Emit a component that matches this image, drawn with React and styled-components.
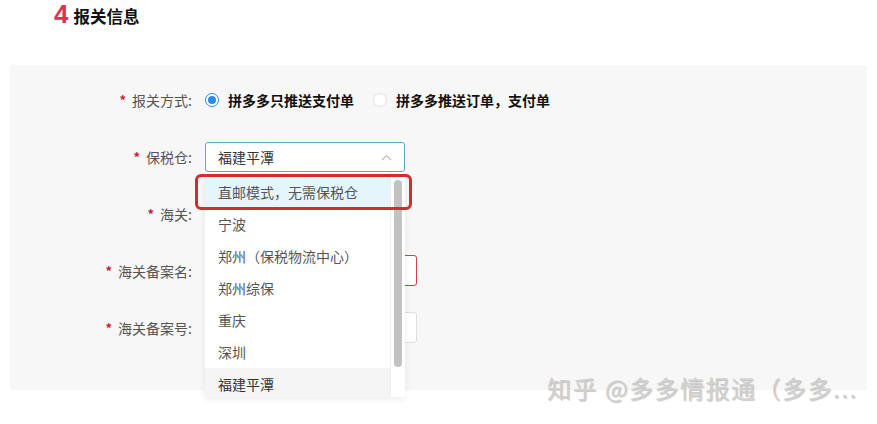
import styled, { createGlobalStyle } from 'styled-components';

const GlobalStyle = createGlobalStyle`
  html, body {
    margin: 0;
    padding: 0;
    background: #fff;
  }
  body {
    font-family: "Noto Sans CJK SC", "Noto Sans", sans-serif;
    color: #333;
  }
`;

const Page = styled.div`
  position: relative;
  width: 877px;
  height: 424px;
  overflow: hidden;
`;

const Header = styled.h2`
  margin: 0;
  height: 65px;
  box-sizing: border-box;
  padding: 0 0 0 54px;
  display: flex;
  align-items: baseline;
  gap: 5px;
  font-size: 16.5px;
  font-weight: 700;
  color: #111;
  line-height: 28px;
`;

const StepNum = styled.span`
  font-family: "Liberation Sans", Arial, sans-serif;
  font-size: 26px;
  line-height: 28px;
  font-weight: 700;
  color: #e0314f;
`;

const Panel = styled.div`
  margin-left: 10px;
  width: 857px;
  height: 325px;
  box-sizing: border-box;
  padding-top: 7px;
  background: #f7f7f7;
  border-radius: 3px;
`;

const Row = styled.div`
  display: grid;
  grid-template-columns: 182px 1fr;
  column-gap: 13px;
  align-items: center;
  height: 56.8px;
`;

const Label = styled.label`
  text-align: right;
  font-size: 14px;
  color: #555;
  white-space: nowrap;
  &::before {
    content: '*';
    color: #c8203a;
    font-size: 13px;
    font-weight: 700;
    margin-right: 6px;
    position: relative;
    top: -1px;
  }
`;

const RadioGroup = styled.div`
  display: flex;
  align-items: center;
`;

const RadioItem = styled.span`
  display: flex;
  align-items: center;
  gap: 9px;
  margin-right: 19px;
  font-size: 14px;
  font-weight: 700;
  color: #111;
`;

const RadioDot = styled.span`
  box-sizing: border-box;
  width: 14px;
  height: 14px;
  border-radius: 50%;
  background: #fff;
  border: 1px solid ${p => (p.checked ? '#2a8be0' : '#e2e2e2')};
  display: flex;
  align-items: center;
  justify-content: center;
  &::after {
    content: '';
    width: 8px;
    height: 8px;
    border-radius: 50%;
    background: ${p => (p.checked ? '#2a8be0' : 'transparent')};
  }
`;

const SelectWrap = styled.div`
  position: relative;
  width: 200px;
`;

const SelectBox = styled.div`
  box-sizing: border-box;
  height: 30px;
  border: 1px solid ${p => (p.active ? '#5aabbd' : '#dcdcdc')};
  border-radius: 3px;
  background: #fff;
  display: flex;
  align-items: center;
  justify-content: space-between;
  padding: 0 12px;
  font-size: 14px;
  color: #333;
`;

const Input = styled.div`
  box-sizing: border-box;
  width: 212px;
  height: 31px;
  background: #fff;
  border: 1px solid ${p => (p.error ? '#c8424a' : '#dedede')};
  border-radius: 3px;
`;

const Dropdown = styled.div`
  position: absolute;
  left: 0;
  top: 100%;
  width: 200px;
  height: 225px;
  background: #fff;
  box-shadow: 0 2px 6px rgba(0, 0, 0, 0.08);
  display: flex;
  z-index: 5;
`;

const OptionList = styled.ul`
  list-style: none;
  margin: 0;
  padding: 4px 0 0;
  flex: 1;
  overflow: hidden;
`;

const Option = styled.li`
  height: 32px;
  line-height: 32px;
  padding-left: 13px;
  font-size: 14px;
  color: ${p => (p.selected ? '#333' : '#555')};
  background: ${p => (p.hover ? '#e4f5fb' : p.selected ? '#f5f5f5' : '#fff')};
  white-space: nowrap;
`;

const ScrollTrack = styled.div`
  width: 15px;
  border-left: 1px solid #efefef;
  box-sizing: border-box;
  padding: 8px 0 0 3px;
`;

const ScrollThumb = styled.div`
  width: 8px;
  height: 187px;
  border-radius: 4px;
  background: #c2c2c2;
`;

const Highlight = styled.div`
  position: absolute;
  left: -10px;
  top: 2px;
  width: 217px;
  height: 36px;
  box-sizing: border-box;
  border: 3px solid #d42b2b;
  border-radius: 6px;
  pointer-events: none;
`;

const Watermark = styled.div`
  position: absolute;
  left: 547px;
  top: 370px;
  font-size: 24px;
  letter-spacing: 1.5px;
  color: #d0d0d0;
  text-shadow: 1px 1px 1px rgba(0, 0, 0, 0.22);
  white-space: nowrap;
`;

const Chevron = () => (
  <svg width="11" height="7" viewBox="0 0 11 7" fill="none">
    <path d="M1 6 L5.5 1.5 L10 6" stroke="#bbb" strokeWidth="1.1" />
  </svg>
);

const options = ['直邮模式，无需保税仓', '宁波', '郑州（保税物流中心）', '郑州综保', '重庆', '深圳', '福建平潭'];

export default function App() {
  return (
    <Page>
      <GlobalStyle />
      <Header>
        <StepNum>4</StepNum>
        报关信息
      </Header>
      <Panel>
        <Row>
          <Label>报关方式:</Label>
          <RadioGroup>
            <RadioItem>
              <RadioDot checked />
              拼多多只推送支付单
            </RadioItem>
            <RadioItem>
              <RadioDot />
              拼多多推送订单，支付单
            </RadioItem>
          </RadioGroup>
        </Row>
        <Row>
          <Label>保税仓:</Label>
          <SelectWrap>
            <SelectBox active>
              福建平潭
              <Chevron />
            </SelectBox>
            <Dropdown>
              <OptionList>
                {options.map((o, i) => (
                  <Option key={o} hover={i === 0} selected={i === options.length - 1}>
                    {o}
                  </Option>
                ))}
              </OptionList>
              <ScrollTrack>
                <ScrollThumb />
              </ScrollTrack>
              <Highlight />
            </Dropdown>
          </SelectWrap>
        </Row>
        <Row>
          <Label>海关:</Label>
          <SelectWrap>
            <SelectBox />
          </SelectWrap>
        </Row>
        <Row>
          <Label>海关备案名:</Label>
          <Input error />
        </Row>
        <Row>
          <Label>海关备案号:</Label>
          <Input />
        </Row>
      </Panel>
      <Watermark>知乎 @多多情报通（多多...</Watermark>
    </Page>
  );
}
